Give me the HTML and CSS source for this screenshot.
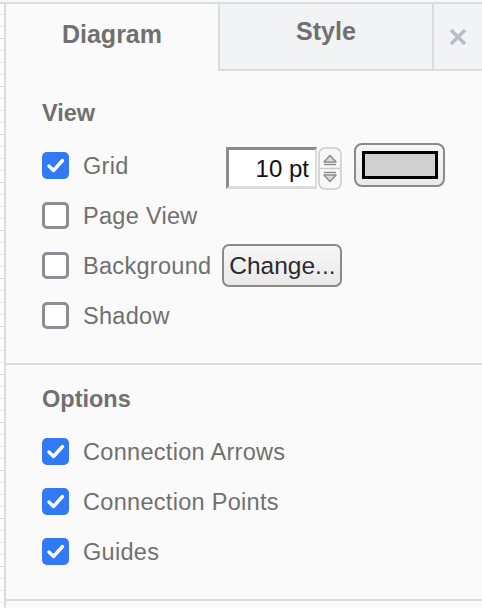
FILE: index.html
```html
<!DOCTYPE html>
<html>
<head>
<meta charset="utf-8">
<link rel="stylesheet" href="styles.css">
</head>
<body>
<div class="page">
  <div class="grid-strip"></div>
  <div class="panel">
    <div class="tabs">
      <div class="tab active">Diagram</div>
      <div class="tab">Style</div>
      <div class="tab close">
        <svg width="18" height="18" viewBox="0 0 18 18"><path d="M2 2 L16 16 M16 2 L2 16" stroke="#b4bdca" stroke-width="3.4" stroke-linecap="butt"/></svg>
      </div>
    </div>

    <section class="section view">
      <h3 class="section-title">View</h3>
      <div class="row">
        <label class="opt">
          <span class="cb checked"><svg width="27" height="27" viewBox="0 0 27 27"><path d="M7 14 L11.5 18.5 L20.5 8.5" fill="none" stroke="#fff" stroke-width="3.4" stroke-linecap="round" stroke-linejoin="round"/></svg></span>
          <span class="lbl">Grid</span>
        </label>
        <div class="controls">
          <div class="num-group">
            <div class="num-input">10 pt</div>
            <div class="spinner">
              <svg width="24" height="43" viewBox="0 0 24 43">
                <rect x="1" y="1" width="22" height="41" rx="6" ry="6" fill="#f7f7f7" stroke="#cbcbcb" stroke-width="1.5"/>
                <line x1="1" y1="21.5" x2="23" y2="21.5" stroke="#cbcbcb" stroke-width="1.5"/>
                <path d="M6 15 L12 8.5 L18 15 Z" fill="#dcdcdc" stroke="#8e8e8e" stroke-width="1.5" stroke-linejoin="round"/>
                <line x1="6" y1="17.5" x2="18" y2="17.5" stroke="#8e8e8e" stroke-width="1.5"/>
                <line x1="6" y1="25.5" x2="18" y2="25.5" stroke="#8e8e8e" stroke-width="1.5"/>
                <path d="M6 28 L12 34.5 L18 28 Z" fill="#dcdcdc" stroke="#8e8e8e" stroke-width="1.5" stroke-linejoin="round"/>
              </svg>
            </div>
          </div>
          <div class="color-btn"><span class="swatch"></span></div>
        </div>
      </div>
      <div class="row">
        <label class="opt">
          <span class="cb"></span>
          <span class="lbl">Page View</span>
        </label>
      </div>
      <div class="row">
        <label class="opt">
          <span class="cb"></span>
          <span class="lbl">Background</span>
        </label>
        <div class="btn">Change...</div>
      </div>
      <div class="row">
        <label class="opt">
          <span class="cb"></span>
          <span class="lbl">Shadow</span>
        </label>
      </div>
    </section>

    <section class="section options">
      <h3 class="section-title">Options</h3>
      <div class="row">
        <label class="opt">
          <span class="cb checked"><svg width="27" height="27" viewBox="0 0 27 27"><path d="M7 14 L11.5 18.5 L20.5 8.5" fill="none" stroke="#fff" stroke-width="3.4" stroke-linecap="round" stroke-linejoin="round"/></svg></span>
          <span class="lbl">Connection Arrows</span>
        </label>
      </div>
      <div class="row">
        <label class="opt">
          <span class="cb checked"><svg width="27" height="27" viewBox="0 0 27 27"><path d="M7 14 L11.5 18.5 L20.5 8.5" fill="none" stroke="#fff" stroke-width="3.4" stroke-linecap="round" stroke-linejoin="round"/></svg></span>
          <span class="lbl">Connection Points</span>
        </label>
      </div>
      <div class="row">
        <label class="opt">
          <span class="cb checked"><svg width="27" height="27" viewBox="0 0 27 27"><path d="M7 14 L11.5 18.5 L20.5 8.5" fill="none" stroke="#fff" stroke-width="3.4" stroke-linecap="round" stroke-linejoin="round"/></svg></span>
          <span class="lbl">Guides</span>
        </label>
      </div>
    </section>
  </div>
</div>
</body>
</html>
```
FILE: styles.css
```css
* { box-sizing: border-box; }

html, body {
  margin: 0;
  padding: 0;
  background: #f8f8f8;
  font-family: "Liberation Sans", Arial, sans-serif;
}

.page {
  display: flex;
  margin-top: 2px;
  border-top: 2px solid #dadce0;
  height: 606px;
}

.grid-strip {
  width: 4px;
  background-color: #ffffff;
  background-image:
    linear-gradient(#d4d4d4 1px, transparent 1px),
    linear-gradient(#ebebeb 1px, transparent 1px);
  background-size: 4px 48px, 4px 12px;
  background-position: 0 34px, 0 10px;
}

.panel {
  flex: 1;
  border-left: 2px solid #dadce0;
  background: #fafafa;
  display: flex;
  flex-direction: column;
}

.tabs {
  display: flex;
  height: 67px;
}

.tab {
  height: 67px;
  display: flex;
  justify-content: center;
  align-items: flex-start;
  padding-top: 13px;
  font-weight: bold;
  font-size: 25px;
  color: #707070;
  background: #f1f3f4;
  border-bottom: 2px solid #dadce0;
  border-left: 2px solid #dadce0;
  width: 214px;
}

.tab.active {
  width: 212px;
  border-left: none;
  border-bottom-color: transparent;
  background: #fafafa;
  padding-top: 16px;
}

.tab.close {
  flex: 1;
  width: auto;
  align-items: center;
  padding-top: 0;
}

.section {
  padding: 29px 37px 23px 36px;
  border-bottom: 2px solid #dadce0;
}

.section.options {
  padding-top: 21px;
}

.section-title {
  margin: 0 0 14px 0;
  font-weight: bold;
  font-size: 23.5px;
  line-height: 26px;
  color: #707070;
}

.row {
  height: 50px;
  display: flex;
  align-items: center;
  gap: 11px;
}

.opt {
  display: flex;
  align-items: center;
  gap: 14px;
}

.cb {
  width: 27px;
  height: 27px;
  border-radius: 5px;
  border: 3px solid #8d8d96;
  background: #ffffff;
  display: block;
  flex: none;
}

.cb.checked {
  border: none;
  background: #3179f5;
}

.cb svg {
  display: block;
}

.lbl {
  font-size: 23.5px;
  letter-spacing: 0.3px;
  color: #707070;
  padding-top: 3px;
}

.controls {
  margin-left: auto;
  display: flex;
  align-items: center;
  gap: 12px;
}

.num-group {
  display: flex;
  align-items: center;
  gap: 1px;
  margin-top: 6px;
}

.num-input {
  width: 91px;
  height: 42px;
  background: #ffffff;
  border-top: 3px solid #8b8b8b;
  border-left: 3px solid #8b8b8b;
  border-right: 2px solid #dcdcdc;
  border-bottom: 3px solid #dcdcdc;
  font-size: 24px;
  color: #111111;
  text-align: right;
  padding-right: 6px;
  line-height: 38px;
}

.spinner svg {
  display: block;
}

.color-btn {
  width: 91px;
  height: 44px;
  border: 2px solid #8a8a8a;
  border-radius: 8px;
  background: linear-gradient(#f7f7f7, #e9e9e9);
  display: flex;
  align-items: center;
  justify-content: center;
}

.swatch {
  display: block;
  width: 76px;
  height: 28px;
  border: 3px solid #000000;
  background: #d0d0d0;
}

.btn {
  width: 120px;
  height: 43px;
  border: 2px solid #8a8a8a;
  border-radius: 7px;
  background: linear-gradient(#f7f7f7, #e9e9e9);
  font-size: 24.5px;
  color: #2b2b2b;
  display: flex;
  align-items: center;
  justify-content: center;
  padding-top: 2px;
}
```
